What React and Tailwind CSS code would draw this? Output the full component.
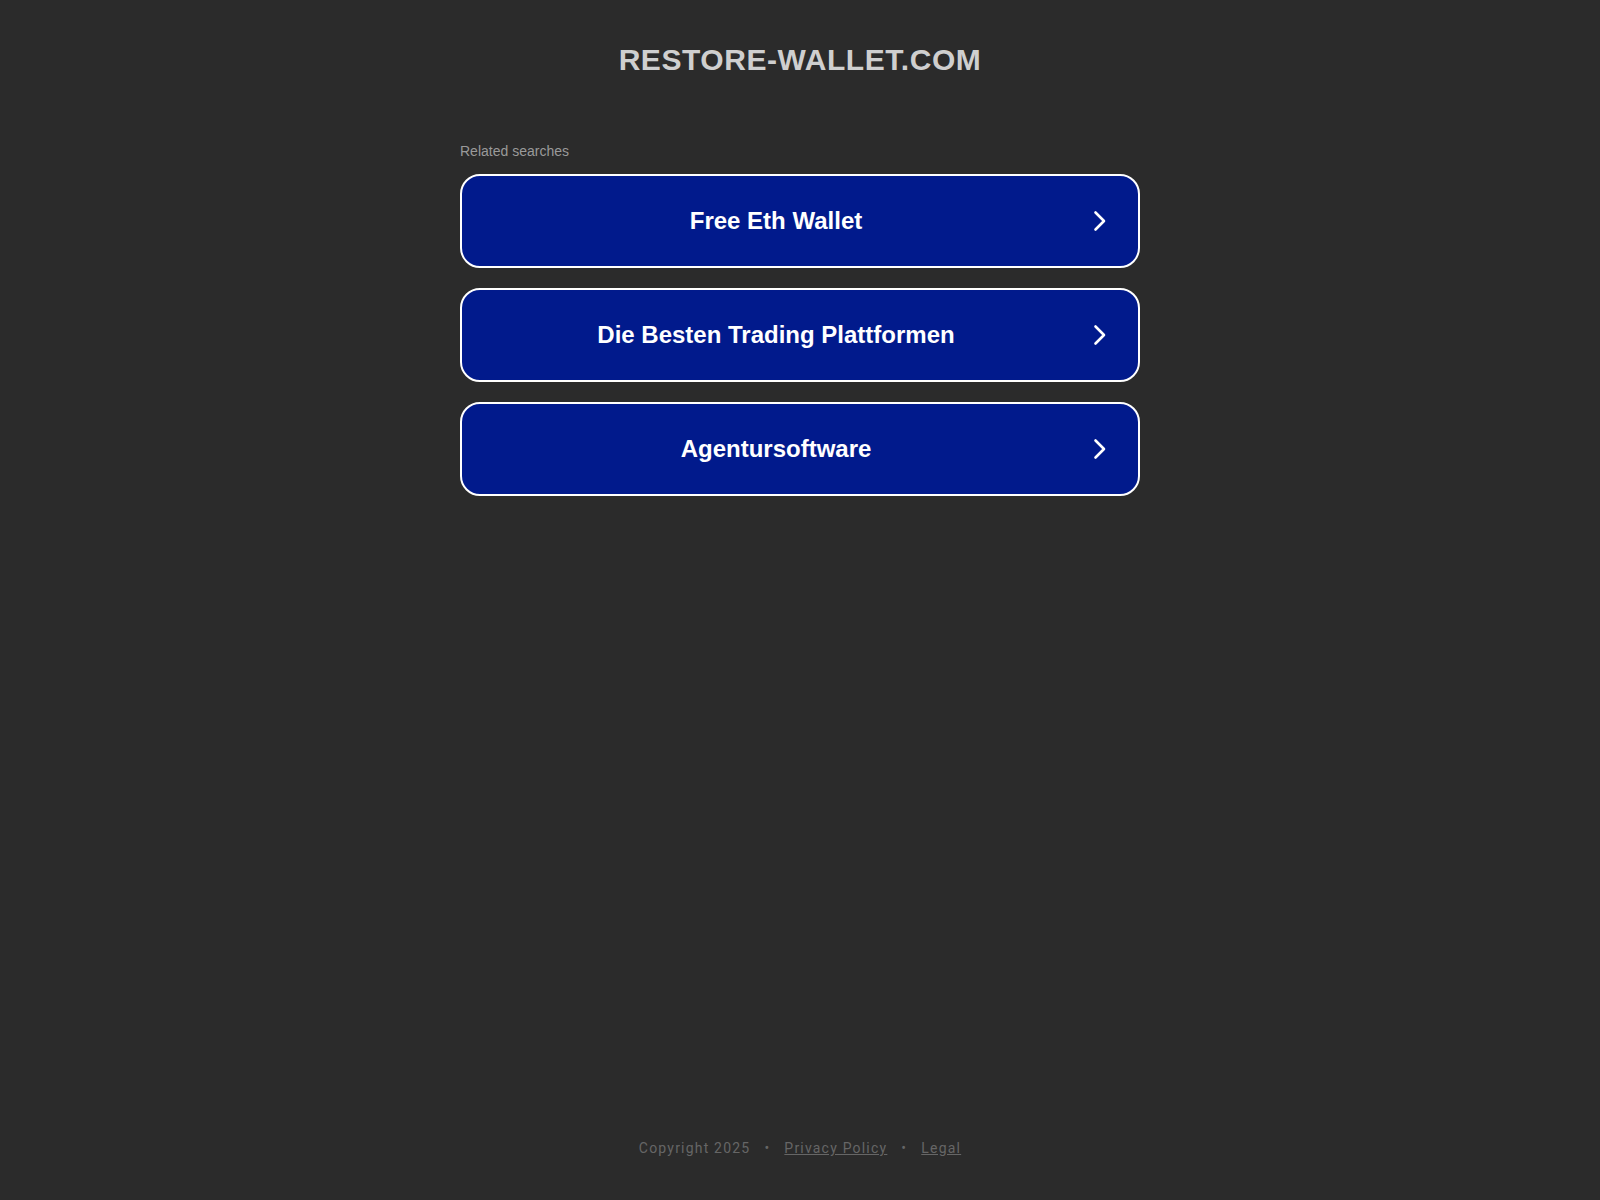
const SEARCHES = ['Free Eth Wallet', 'Die Besten Trading Plattformen', 'Agentursoftware'];

function Chevron() {
  return (
    <svg width="14" height="22" viewBox="0 0 14 22" fill="none" className="text-white">
      <polyline points="2.5,2.5 11,11 2.5,19.5" stroke="currentColor" strokeWidth="2.6" strokeLinecap="round" strokeLinejoin="round" />
    </svg>
  );
}

export default function App() {
  return (
    <div
      className="min-h-screen bg-[#2b2b2b] flex flex-col"
      style={{ fontFamily: '"Liberation Sans", Arial, sans-serif' }}
    >
      {/* ── Domain title ── */}
      <header className="pt-[42px] text-center">
        <h1 className="text-[30px] leading-[36px] font-bold text-[#cfcfcf] tracking-[0.55px]">
          RESTORE-WALLET.COM
        </h1>
      </header>

      {/* ── Related searches ── */}
      <main className="w-[680px] mx-auto mt-[63px]">
        <div className="text-[14px] leading-[20px] text-[#9a9a9a]">Related searches</div>
        <div className="mt-[13px] flex flex-col gap-[20px]">
          {SEARCHES.map((s) => (
            <a
              key={s}
              href="#"
              className="h-[94px] flex items-center rounded-[20px] border-2 border-white bg-[#011a8c]"
            >
              <span className="flex-1 text-center text-[24px] font-bold text-white">{s}</span>
              <span className="w-[48px] flex items-center pl-[3px]">
                <Chevron />
              </span>
            </a>
          ))}
        </div>
      </main>

      {/* ── Footer ── */}
      <footer
        className="mt-auto pb-[42px] text-center text-[14px] leading-[20px] tracking-[1.2px] text-[#666666]"
        style={{ fontFamily: 'Roboto, "Liberation Sans", sans-serif' }}
      >
        <span>Copyright 2025</span>
        <span className="mx-[14px]">•</span>
        <a href="#" className="underline">Privacy Policy</a>
        <span className="mx-[14px]">•</span>
        <a href="#" className="underline">Legal</a>
      </footer>
    </div>
  );
}
